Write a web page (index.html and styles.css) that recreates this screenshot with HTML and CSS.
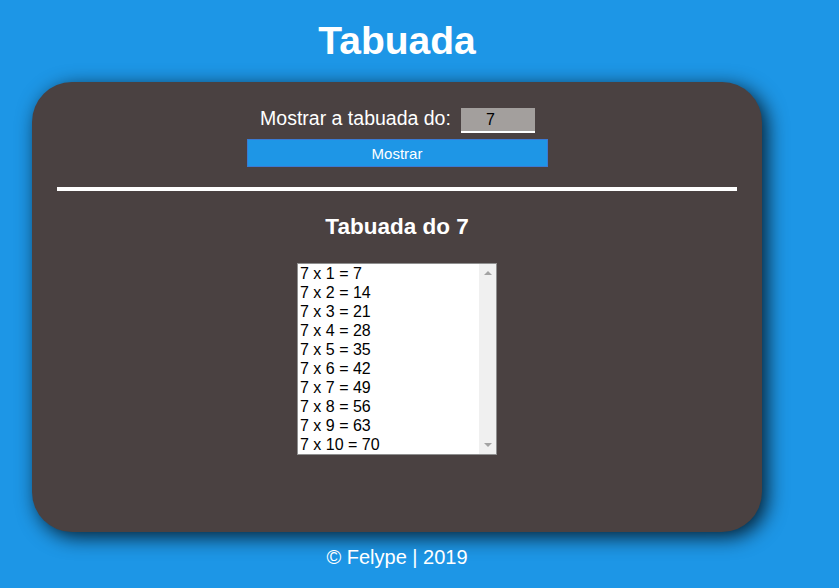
FILE: index.html
```html
<!DOCTYPE html>
<html lang="pt-br">
<head>
<meta charset="utf-8">
<title>Tabuada</title>
<link rel="stylesheet" href="styles.css">
</head>
<body>
<header class="top">
  <h1 class="title">Tabuada</h1>
</header>
<section class="card">
  <div class="form">
    <div class="row">
      <label class="label" for="num">Mostrar a tabuada do:</label>
      <input class="num" id="num" type="text" value="7">
    </div>
    <button class="btn" type="button">Mostrar</button>
  </div>
  <hr class="rule">
  <h2 class="subtitle">Tabuada do 7</h2>
  <div class="list">
    <ul class="options">
      <li>7 x 1 = 7</li>
      <li>7 x 2 = 14</li>
      <li>7 x 3 = 21</li>
      <li>7 x 4 = 28</li>
      <li>7 x 5 = 35</li>
      <li>7 x 6 = 42</li>
      <li>7 x 7 = 49</li>
      <li>7 x 8 = 56</li>
      <li>7 x 9 = 63</li>
      <li>7 x 10 = 70</li>
    </ul>
    <div class="scroll">
      <span class="arrow up"></span>
      <span class="arrow down"></span>
    </div>
  </div>
</section>
<footer class="foot">&copy; Felype | 2019</footer>
</body>
</html>
```
FILE: styles.css
```css
* { box-sizing: border-box; }
html, body { margin: 0; padding: 0; }
body {
  background: #1d96e6;
  font-family: "Liberation Sans", Arial, sans-serif;
  color: #fff;
  width: 794px;
  padding-top: 18px;
}
.top { display: flex; justify-content: center; margin-left: 32px; width: 730px; }
.title {
  margin: 0;
  font-size: 39px;
  line-height: 45px;
  font-weight: bold;
}
.card {
  margin: 19px 0 0 32px;
  width: 730px;
  height: 450px;
  background: #4a4141;
  border-radius: 40px;
  box-shadow: 5px 5px 20px rgba(0,0,0,0.8);
  padding: 26px 25px 0 25px;
  display: flex;
  flex-direction: column;
  align-items: center;
}
.form { display: flex; flex-direction: column; align-items: center; gap: 6px; }
.row { display: flex; align-items: flex-start; gap: 10px; padding-left: 1px; }
.label { font-size: 19.5px; line-height: 21px; }
.num {
  width: 74px;
  height: 25px;
  border: 0;
  border-bottom: 2px solid #fff;
  background: #a39f9d;
  color: #000;
  font-family: "Liberation Sans", Arial, sans-serif;
  font-size: 16px;
  text-align: center;
  padding: 0 15px 0 0;
  outline: none;
}
.btn {
  width: 301px;
  height: 28px;
  background: #1e96e6;
  border: 1px solid #3a7ad4;
  color: #fff;
  font-family: "Liberation Sans", Arial, sans-serif;
  font-size: 15px;
  padding: 0;
}
.rule {
  width: 680px;
  height: 4px;
  margin: 20px 0 0 0;
  border: 0;
  background: #fff;
}
.subtitle {
  margin: 23px 0 0 0;
  font-size: 22.5px;
  line-height: 26px;
  font-weight: bold;
}
.list {
  margin-top: 23px;
  width: 200px;
  height: 192px;
  border: 1px solid #8f8f8f;
  background: #fff;
  display: flex;
}
.options {
  list-style: none;
  margin: 0;
  padding: 0 0 0 2px;
  flex: 1;
  color: #000;
  font-size: 16px;
  line-height: 19px;
}
.scroll {
  width: 17px;
  background: #f0f0f0;
  display: flex;
  flex-direction: column;
  justify-content: space-between;
  align-items: center;
  padding: 7px 0 7px 0;
}
.arrow { width: 0; height: 0; border-left: 4px solid transparent; border-right: 4px solid transparent; }
.up { border-bottom: 4px solid #a3a3a3; }
.down { border-top: 4px solid #a3a3a3; }
.foot {
  margin: 14px 0 0 32px;
  width: 730px;
  text-align: center;
  font-size: 20px;
  line-height: 23px;
}
```
